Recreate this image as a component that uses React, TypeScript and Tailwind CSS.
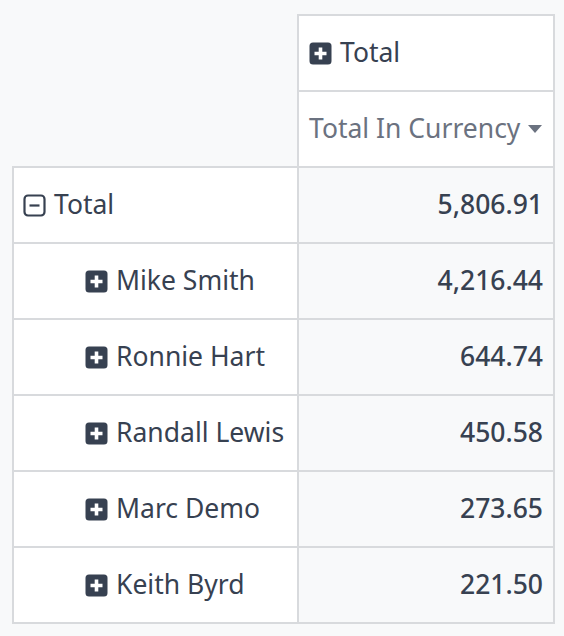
import React from 'react'

const ROWS = [
  { name: 'Mike Smith', value: '4,216.44' },
  { name: 'Ronnie Hart', value: '644.74' },
  { name: 'Randall Lewis', value: '450.58' },
  { name: 'Marc Demo', value: '273.65' },
  { name: 'Keith Byrd', value: '221.50' },
]

function PlusSquare() {
  return (
    <svg width="23" height="23" viewBox="0 0 23 23" className="shrink-0">
      <rect x="0.5" y="0.5" width="22" height="22" rx="3.5" fill="#374151" />
      <path d="M11.5 5.5v12M5.5 11.5h12" stroke="#fff" strokeWidth="3.6" />
    </svg>
  )
}

function MinusSquare() {
  return (
    <svg width="23" height="23" viewBox="0 0 23 23" className="shrink-0">
      <rect x="1.5" y="1.5" width="20" height="20" rx="3.5" fill="none" stroke="#374151" strokeWidth="2.2" />
      <path d="M6.5 11.5h10" stroke="#374151" strokeWidth="2.2" />
    </svg>
  )
}

export default function App() {
  return (
    <div
      className="min-h-[636px] bg-[#f8f9fa] pl-3 pt-[14px] text-[#374151]"
      style={{ fontFamily: '"Noto Sans", "Open Sans", sans-serif' }}
    >
      <table className="border-collapse text-[26.5px]">
        <thead>
          <tr>
            <th className="w-[285px] p-0" />
            <th className="h-[76px] w-[256px] border-2 border-[#d8dadd] bg-white px-[10px] text-left font-normal">
              <span className="flex items-center gap-2">
                <PlusSquare />
                Total
              </span>
            </th>
          </tr>
          <tr>
            <th className="p-0" />
            <th className="h-[76px] border-2 border-[#d8dadd] bg-white px-[10px] text-left font-normal text-[#6b7280]">
              <span className="flex items-center gap-[8px] whitespace-nowrap">
                Total In Currency
                <svg width="14" height="8" viewBox="0 0 14 8">
                  <path d="M0 0h14L7 8z" fill="#6b7280" />
                </svg>
              </span>
            </th>
          </tr>
        </thead>
        <tbody>
          <tr>
            <td className="h-[76px] border-2 border-[#d8dadd] bg-white px-[9px]">
              <span className="flex items-center gap-2">
                <MinusSquare />
                Total
              </span>
            </td>
            <td className="h-[76px] border-2 border-[#d8dadd] bg-[#f8f9fa] px-[10px] text-right font-medium">5,806.91</td>
          </tr>
          {ROWS.map((r) => (
            <tr key={r.name}>
              <td className="h-[76px] border-2 border-[#d8dadd] bg-white pl-[71px] pr-2">
                <span className="flex items-center gap-2 whitespace-nowrap">
                  <PlusSquare />
                  {r.name}
                </span>
              </td>
              <td className="h-[76px] border-2 border-[#d8dadd] bg-[#f8f9fa] px-[10px] text-right font-medium">{r.value}</td>
            </tr>
          ))}
        </tbody>
      </table>
    </div>
  )
}
